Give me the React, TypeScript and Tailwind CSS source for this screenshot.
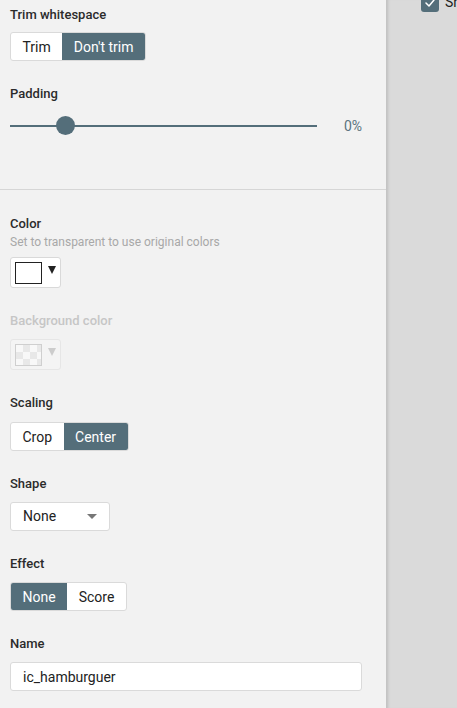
import type { ReactNode } from 'react'

const font = { fontFamily: 'Roboto, "Noto Sans", Arial, sans-serif' }

function Label({ children, muted }: { children: ReactNode; muted?: boolean }) {
  return (
    <div className={`h-4 text-[13px] leading-4 font-medium ${muted ? 'text-[#c6c6c6]' : 'text-[#2b2b2b]'}`}>
      {children}
    </div>
  )
}

function Segmented({ options, active }: { options: string[]; active: number }) {
  return (
    <div className="flex self-start h-[29px] rounded-[3px] border border-[#dadada] bg-white overflow-hidden">
      {options.map((o, i) => (
        <div
          key={o}
          className={`flex items-center px-[11.5px] text-[14px] leading-none ${i === active ? 'bg-[#546e7a] text-white' : 'text-[#222]'}`}
        >
          {o}
        </div>
      ))}
    </div>
  )
}

function Caret({ className }: { className: string }) {
  return (
    <svg width="8" height="8" viewBox="0 0 8 8" className={className}>
      <polygon points="0,0 8,0 4,8" fill="currentColor" />
    </svg>
  )
}

export default function App() {
  return (
    <div className="flex h-[708px] w-[457px] overflow-hidden bg-[#dadada]" style={font}>
      <div className="w-[386px] shrink-0 bg-[#f2f2f2]">
        {/* trim + padding */}
        <div className="flex flex-col h-[190px] border-b border-[#d6d6d6] pt-[7px] pl-[10px] pr-[24px]">
          <Label>Trim whitespace</Label>
          <div className="mt-[9px] flex">
            <Segmented options={['Trim', "Don't trim"]} active={1} />
          </div>
          <div className="mt-[25px]">
            <Label>Padding</Label>
          </div>
          <div className="mt-[10px] flex items-center h-[28px]">
            <div className="relative flex-1 h-[2px] bg-[#546e7a]">
              <div className="absolute left-[46px] top-[-9px] w-[19px] h-[19px] rounded-full bg-[#546e7a]" />
            </div>
            <div className="ml-[27px] text-[14px] text-[#5b7480]">0%</div>
          </div>
        </div>

        {/* output options */}
        <div className="flex flex-col pt-[26px] pl-[10px] pr-[24px]">
          <Label>Color</Label>
          <div className="mt-[2px] h-4 text-[12px] leading-4 text-[#a8a8a8]">Set to transparent to use original colors</div>
          <div className="mt-[7px] flex items-center self-start h-[31px] w-[51px] rounded-[3px] border border-[#d9d9d9] bg-white pl-[4px]">
            <div className="w-[27px] h-[22px] border border-[#222] bg-white" />
            <Caret className="ml-[6px] -mt-[6px] text-[#222]" />
          </div>

          <div className="mt-[25px]">
            <Label muted>Background color</Label>
          </div>
          <div className="mt-[10px] flex items-center self-start h-[31px] w-[51px] rounded-[3px] border border-[#e6e6e6] bg-[#f4f4f4] pl-[4px]">
            <div
              className="w-[27px] h-[22px] border border-[#cfcfcf] bg-[length:14px_14px]"
              style={{
                backgroundColor: '#f8f8f8',
                backgroundImage:
                  'linear-gradient(45deg, #e8e8e8 25%, transparent 25%, transparent 75%, #e8e8e8 75%), linear-gradient(45deg, #e8e8e8 25%, transparent 25%, transparent 75%, #e8e8e8 75%)',
                backgroundPosition: '0 0, 7px 7px',
              }}
            />
            <Caret className="ml-[6px] -mt-[6px] text-[#cccccc]" />
          </div>

          <div className="mt-[25px]">
            <Label>Scaling</Label>
          </div>
          <div className="mt-[11px] flex">
            <Segmented options={['Crop', 'Center']} active={1} />
          </div>

          <div className="mt-[25px]">
            <Label>Shape</Label>
          </div>
          <div className="mt-[10px] flex items-center justify-between self-start h-[29px] w-[100px] rounded-[3px] border border-[#dadada] bg-white pl-3 pr-3">
            <span className="text-[14px] text-[#222]">None</span>
            <svg width="10" height="5" viewBox="0 0 10 5" className="text-[#777]">
              <polygon points="0,0 10,0 5,5" fill="currentColor" />
            </svg>
          </div>

          <div className="mt-[25px]">
            <Label>Effect</Label>
          </div>
          <div className="mt-[10px] flex">
            <Segmented options={['None', 'Score']} active={0} />
          </div>

          <div className="mt-[25px]">
            <Label>Name</Label>
          </div>
          <input
            readOnly
            value="ic_hamburguer"
            className="mt-[10px] h-[29px] w-full rounded-[3px] border border-[#dadada] bg-white px-3 text-[14px] text-[#222] outline-none"
          />
        </div>
      </div>

      {/* right side */}
      <div className="flex-1 border-l border-[#c4c4c4] shadow-[inset_3px_0_3px_-2px_rgba(0,0,0,0.12)] overflow-hidden">
        <div className="-mt-[8px] ml-[34px] flex items-center gap-[6px] whitespace-nowrap">
          <div className="flex items-center justify-center w-[18px] h-[18px] shrink-0 rounded-[3px] bg-[#546e7a]">
            <svg width="12" height="12" viewBox="0 0 24 24" fill="none" stroke="white" strokeWidth="3" strokeLinecap="round" strokeLinejoin="round">
              <polyline points="4 12 10 18 20 6" />
            </svg>
          </div>
          <span className="text-[14px] text-[#222]">Show grid</span>
        </div>
      </div>
    </div>
  )
}
